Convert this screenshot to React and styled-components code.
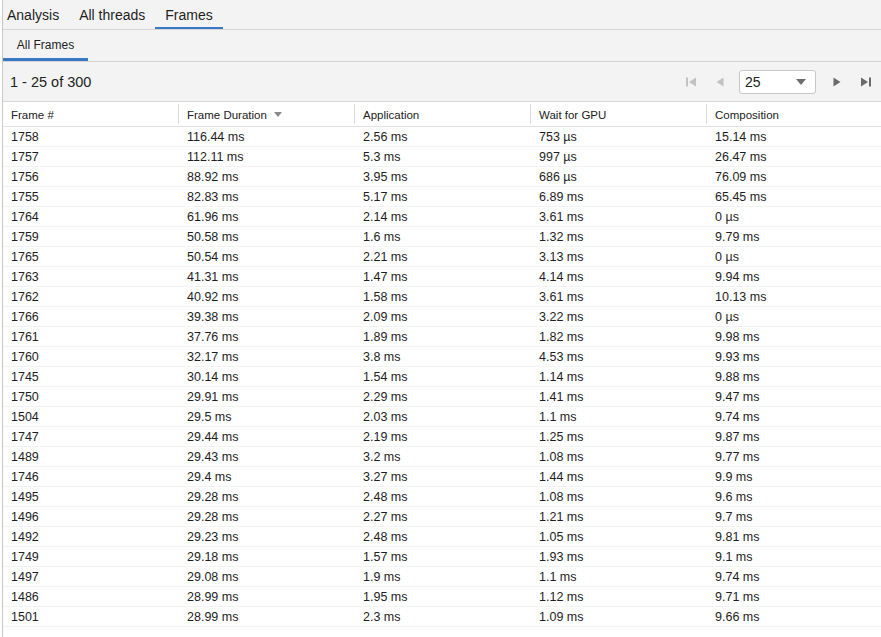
import React from "react";
import styled, { createGlobalStyle } from "styled-components";

const GlobalStyle = createGlobalStyle`
  html, body {
    margin: 0;
    padding: 0;
    background: #ffffff;
  }
  body {
    font-family: "Liberation Sans", Arial, sans-serif;
    color: #222222;
  }
`;

const columns = ["Frame #", "Frame Duration", "Application", "Wait for GPU", "Composition"];

const rows = [
  ["1758", "116.44 ms", "2.56 ms", "753 µs", "15.14 ms"],
  ["1757", "112.11 ms", "5.3 ms", "997 µs", "26.47 ms"],
  ["1756", "88.92 ms", "3.95 ms", "686 µs", "76.09 ms"],
  ["1755", "82.83 ms", "5.17 ms", "6.89 ms", "65.45 ms"],
  ["1764", "61.96 ms", "2.14 ms", "3.61 ms", "0 µs"],
  ["1759", "50.58 ms", "1.6 ms", "1.32 ms", "9.79 ms"],
  ["1765", "50.54 ms", "2.21 ms", "3.13 ms", "0 µs"],
  ["1763", "41.31 ms", "1.47 ms", "4.14 ms", "9.94 ms"],
  ["1762", "40.92 ms", "1.58 ms", "3.61 ms", "10.13 ms"],
  ["1766", "39.38 ms", "2.09 ms", "3.22 ms", "0 µs"],
  ["1761", "37.76 ms", "1.89 ms", "1.82 ms", "9.98 ms"],
  ["1760", "32.17 ms", "3.8 ms", "4.53 ms", "9.93 ms"],
  ["1745", "30.14 ms", "1.54 ms", "1.14 ms", "9.88 ms"],
  ["1750", "29.91 ms", "2.29 ms", "1.41 ms", "9.47 ms"],
  ["1504", "29.5 ms", "2.03 ms", "1.1 ms", "9.74 ms"],
  ["1747", "29.44 ms", "2.19 ms", "1.25 ms", "9.87 ms"],
  ["1489", "29.43 ms", "3.2 ms", "1.08 ms", "9.77 ms"],
  ["1746", "29.4 ms", "3.27 ms", "1.44 ms", "9.9 ms"],
  ["1495", "29.28 ms", "2.48 ms", "1.08 ms", "9.6 ms"],
  ["1496", "29.28 ms", "2.27 ms", "1.21 ms", "9.7 ms"],
  ["1492", "29.23 ms", "2.48 ms", "1.05 ms", "9.81 ms"],
  ["1749", "29.18 ms", "1.57 ms", "1.93 ms", "9.1 ms"],
  ["1497", "29.08 ms", "1.9 ms", "1.1 ms", "9.74 ms"],
  ["1486", "28.99 ms", "1.95 ms", "1.12 ms", "9.71 ms"],
  ["1501", "28.99 ms", "2.3 ms", "1.09 ms", "9.66 ms"],
];

const PageIcon = ({ kind, disabled }) => {
  const c = disabled ? "#c2c2c2" : "#6b6b6b";
  return (
    <svg width="14" height="14" viewBox="0 0 14 14">
      {kind === "first" && (
        <>
          <rect x="2" y="2.5" width="2" height="9" fill={c} />
          <path d="M12 2.5 L5 7 L12 11.5 Z" fill={c} />
        </>
      )}
      {kind === "prev" && <path d="M10.5 2.5 L3.5 7 L10.5 11.5 Z" fill={c} />}
      {kind === "next" && <path d="M3.5 2.5 L10.5 7 L3.5 11.5 Z" fill={c} />}
      {kind === "last" && (
        <>
          <path d="M2 2.5 L9 7 L2 11.5 Z" fill={c} />
          <rect x="10" y="2.5" width="2" height="9" fill={c} />
        </>
      )}
    </svg>
  );
};

const App = () => {
  return (
    <>
      <GlobalStyle />
      <Window>
        <TabBar>
          <Tab>Analysis</Tab>
          <Tab>All threads</Tab>
          <Tab $active>Frames</Tab>
        </TabBar>
        <SubTabBar>
          <SubTab $active>All Frames</SubTab>
        </SubTabBar>
        <Toolbar>
          <Count>1 - 25 of 300</Count>
          <Pager>
            <PagerButton><PageIcon kind="first" disabled /></PagerButton>
            <PagerButton><PageIcon kind="prev" disabled /></PagerButton>
            <PageSelect>
              <span>25</span>
              <Caret />
            </PageSelect>
            <PagerButton><PageIcon kind="next" /></PagerButton>
            <PagerButton><PageIcon kind="last" /></PagerButton>
          </Pager>
        </Toolbar>
        <Table>
          <HeaderRow>
            {columns.map((col, i) => (
              <HeaderCell key={col} $last={i === columns.length - 1}>
                {col}
                {i === 1 && <SortArrow />}
              </HeaderCell>
            ))}
          </HeaderRow>
          {rows.map((row) => (
            <Row key={row[0]}>
              {row.map((cell, i) => (
                <Cell key={i}>{cell}</Cell>
              ))}
            </Row>
          ))}
        </Table>
      </Window>
    </>
  );
};

export default App;

const Window = styled.div`
  width: 881px;
  height: 637px;
  margin-left: 2px;
  border-left: 1px solid #c9c9c9;
  box-sizing: border-box;
  overflow: hidden;
  display: flex;
  flex-direction: column;
`;

const TabBar = styled.div`
  display: flex;
  height: 30px;
  background: #f3f3f3;
  border-bottom: 1px solid #d6d6d6;
  box-sizing: border-box;
`;

const Tab = styled.div`
  display: flex;
  align-items: center;
  padding: 2px 10px 0 10px;
  font-size: 14px;
  color: #1f1f1f;
  box-sizing: border-box;
  border-bottom: 2px solid ${(p) => (p.$active ? "#3b78c3" : "transparent")};

  &:first-child {
    padding-left: 4px;
  }
`;

const SubTabBar = styled.div`
  display: flex;
  height: 32px;
  background: #f3f3f3;
  border-bottom: 1px solid #d2d2d2;
  box-sizing: border-box;
`;

const SubTab = styled.div`
  display: flex;
  align-items: center;
  justify-content: center;
  width: 85px;
  padding-top: 1px;
  box-sizing: border-box;
  font-size: 12px;
  color: #1f1f1f;
  border-bottom: 3px solid ${(p) => (p.$active ? "#3b78c3" : "transparent")};
`;

const Toolbar = styled.div`
  display: flex;
  align-items: center;
  justify-content: space-between;
  height: 40px;
  padding: 0 7px;
  background: #f3f3f3;
  border-bottom: 1px solid #d6d6d6;
  box-sizing: border-box;
`;

const Count = styled.div`
  font-size: 14.5px;
  color: #222222;
  padding-top: 1px;
`;

const Pager = styled.div`
  display: flex;
  align-items: center;
  margin-right: -4px;
`;

const PagerButton = styled.div`
  width: 29px;
  height: 24px;
  display: flex;
  align-items: center;
  justify-content: center;
`;

const PageSelect = styled.div`
  width: 77px;
  height: 24px;
  margin: 0 6px 0 5px;
  background: #ffffff;
  border: 1px solid #c8c8c8;
  border-radius: 3px;
  box-sizing: border-box;
  display: flex;
  align-items: center;
  justify-content: space-between;
  padding: 0 9px 0 5px;
  font-size: 14px;
  color: #222222;
`;

const Caret = styled.span`
  width: 0;
  height: 0;
  border-left: 5px solid transparent;
  border-right: 5px solid transparent;
  border-top: 6px solid #6e6e6e;
`;

const Table = styled.div`
  flex: 1;
  background: #ffffff;
  display: flex;
  flex-direction: column;
`;

const HeaderRow = styled.div`
  display: grid;
  grid-template-columns: 176px 176px 176px 176px 1fr;
  height: 25px;
  border-bottom: 1px solid #e2e2e2;
  box-sizing: border-box;
`;

const HeaderCell = styled.div`
  display: flex;
  align-items: center;
  padding: 1px 0 0 8px;
  font-size: 11.5px;
  color: #222222;
  border-right: ${(p) => (p.$last ? "none" : "1px solid #dcdcdc")};
  margin: 2px 0;
`;

const SortArrow = styled.span`
  margin-left: 7px;
  width: 0;
  height: 0;
  border-left: 4.5px solid transparent;
  border-right: 4.5px solid transparent;
  border-top: 5px solid #8a8a8a;
`;

const Row = styled.div`
  display: grid;
  grid-template-columns: 176px 176px 176px 176px 1fr;
  height: 20px;
  padding-top: 1px;
  border-bottom: 1px solid #f3f3f3;
  box-sizing: border-box;
`;

const Cell = styled.div`
  display: flex;
  align-items: center;
  padding-left: 8px;
  font-size: 12.5px;
  color: #1e1e1e;
`;
